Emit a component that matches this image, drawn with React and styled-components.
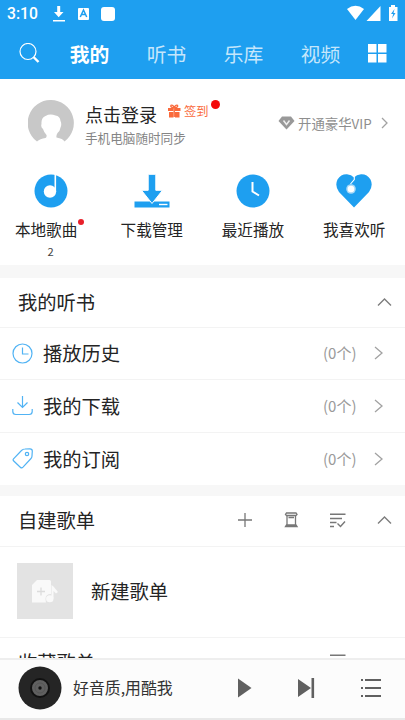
import React from "react";
import styled, { createGlobalStyle } from "styled-components";

const BLUE = "#1e9ff0";

const GlobalStyle = createGlobalStyle`
  * { box-sizing: border-box; }
  body {
    margin: 0;
    background: #fff;
    color: #242424;
    font-family: "Noto Sans CJK SC", "Noto Sans", sans-serif;
    overflow: hidden;
  }
  svg { display: block; flex: none; }
`;

const Screen = styled.div`
  width: 405px;
  height: 720px;
  display: flex;
  flex-direction: column;
  overflow: hidden;
  background: #fff;
`;

const Header = styled.header`
  flex: none;
  height: 79px;
  background: ${BLUE};
  color: #fff;
`;

const StatusBar = styled.div`
  height: 28px;
  padding: 0 7px;
  display: flex;
  align-items: center;
  justify-content: space-between;
`;

const StatusGroup = styled.div`
  display: flex;
  align-items: center;
`;

const Clock = styled.span`
  width: 46px;
  font: 500 15.7px/28px Roboto, sans-serif;
`;

const Nav = styled.nav`
  height: 51px;
  padding: 0 19px;
  display: grid;
  grid-template-columns: 32px 77px 77px 77px 77px 19px;
  align-items: center;
  & > :last-child { margin-left: 9px; }
`;

const NavTab = styled.span`
  justify-self: center;
  font-size: 19.8px;
  line-height: 50px;
  font-weight: ${(p) => (p.$active ? 700 : 400)};
  color: ${(p) => (p.$active ? "#fff" : "#c5e6fb")};
`;

const Content = styled.main`
  flex: 1;
  min-height: 0;
  overflow: hidden;
`;

const Profile = styled.section`
  height: 88px;
  padding: 0 17px 0 28px;
  display: flex;
  align-items: center;
`;

const Account = styled.div`
  flex: 1;
  margin-left: 11px;
  padding-top: 3px;
`;

const LoginRow = styled.div`
  display: flex;
  align-items: center;
  height: 26px;
`;

const LoginText = styled.span`
  font-size: 18px;
  line-height: 26px;
  width: 83px;
  white-space: nowrap;
`;

const CheckIn = styled.span`
  position: relative;
  display: flex;
  align-items: center;
  gap: 3px;
  margin-top: -5px;
  font-size: 12.3px;
  line-height: 18px;
  color: #fa6a3c;
`;

const Dot = styled.i`
  position: absolute;
  top: ${(p) => p.$top}px;
  right: ${(p) => p.$right}px;
  width: ${(p) => p.$size}px;
  height: ${(p) => p.$size}px;
  border-radius: 50%;
  background: ${(p) => p.$color};
`;

const SubText = styled.div`
  font-size: 12.6px;
  line-height: 22px;
  color: #858585;
`;

const Vip = styled.div`
  display: flex;
  align-items: center;
  font-size: 13.4px;
  line-height: 20px;
  color: #8e8e8e;
  & > span { width: 86px; padding-left: 3px; white-space: nowrap; }
`;

const Shortcuts = styled.section`
  height: 98px;
  display: grid;
  grid-template-columns: repeat(4, 101.2px);
`;

const Shortcut = styled.div`
  display: flex;
  flex-direction: column;
  align-items: center;
  padding-top: 6px;
`;

const ShortcutLabel = styled.span`
  position: relative;
  margin-top: 8px;
  margin-left: ${(p) => p.$shift || 0}px;
  font-size: 15.6px;
  line-height: 24px;
`;

const Count = styled.span`
  font: 11.2px/18px "Noto Sans CJK SC", sans-serif;
  margin-top: 1px;
  color: #444;
`;

const Band = styled.div`
  height: ${(p) => p.$height}px;
  background: #f7f7f7;
`;

const SectionHead = styled.div`
  height: ${(p) => p.$height}px;
  padding: 0 13px 2px 18px;
  display: flex;
  align-items: center;
  border-bottom: 1px solid #f3f3f3;
`;

const Title = styled.span`
  flex: 1;
  font-size: 19.3px;
  line-height: 30px;
`;

const Actions = styled.div`
  display: grid;
  grid-template-columns: 46px 46px 47px 15px;
  align-items: center;
`;

const Row = styled.div`
  height: ${(p) => p.$height}px;
  padding: 0 22px 1px 12px;
  display: flex;
  align-items: center;
  border-bottom: ${(p) => (p.$last ? "none" : "1px solid #f3f3f3")};
`;

const RowLabel = styled(Title)`
  margin-left: 10px;
`;

const RowCount = styled.span`
  width: 51px;
  font: 15px/24px "Noto Sans CJK SC", sans-serif;
  color: #9a9a9a;
  white-space: nowrap;
`;

const PlaylistItem = styled.div`
  height: 91px;
  padding: 0 17px 3px;
  display: flex;
  align-items: center;
  border-bottom: 1px solid #f3f3f3;
`;

const Cover = styled.div`
  width: 56px;
  height: 56px;
  margin-right: 18px;
  display: flex;
  align-items: center;
  justify-content: center;
  background: #e3e3e3;
`;

const Player = styled.footer`
  flex: none;
  height: 62px;
  padding: 0 24px 3px 18px;
  display: flex;
  align-items: center;
  border-top: 2px solid #eeeeee;
  border-bottom: 2px solid #e8e8e8;
  background: #fcfcfc;
`;

const Song = styled.span`
  flex: 1;
  margin-left: 11px;
  font-size: 15.9px;
  line-height: 26px;
  color: #333;
`;

const Controls = styled.div`
  display: grid;
  grid-template-columns: 60px 63px 20px;
  align-items: center;
`;

const Chevron = ({ w = 8, h = 12, color = "#a2a2a2" }) => (
  <svg width={w + 2} height={h + 2} viewBox={`0 0 ${w + 2} ${h + 2}`} fill="none" stroke={color} strokeWidth="1.3">
    <path d={`M1 1L${w + 1} ${h / 2 + 1}L1 ${h + 1}`} />
  </svg>
);

const Collapse = () => (
  <svg width="15" height="10" fill="none" stroke="#7d7d7d" strokeWidth="1.4">
    <path d="M1 8.5L7.5 2L14 8.5" />
  </svg>
);

const StatusLeft = () => (
  <svg width="64" height="18" viewBox="53 5 64 18" fill="#fff">
    <path d="M57.2 6h3v6h3.3L58.7 17.2L54 12h3.2zM53 20h12v1.6H53z" />
    <rect x="78" y="8" width="11" height="12" rx="1" />
    <path d="M80.3 17L83.5 10L86.7 17M81.5 14.5h4" fill="none" stroke={BLUE} strokeWidth="1.5" />
    <rect x="101" y="7" width="14" height="14" rx="3" />
  </svg>
);

const StatusRight = () => (
  <svg width="52" height="18" viewBox="346 5 52 18" fill="#fff">
    <path d="M347 9Q355.5 2.5 364 9L355.5 20z" />
    <path d="M380.5 6v15H366.500z" />
    <path d="M391 5h4v2h2.500v14h-8.500V7h2z" />
    <path d="M394.500 9L391 14h2.200L392 18.500L395.500 13h-2z" fill={BLUE} />
  </svg>
);

const SearchIcon = () => (
  <svg width="21" height="21" fill="none" stroke="#fff">
    <circle cx="9" cy="8.5" r="8" strokeWidth="1.2" />
    <path d="M14.5 14L19.5 19" strokeWidth="2.4" />
  </svg>
);

const GridIcon = () => (
  <svg width="19" height="19" fill="#fff">
    <path d="M0 0h8.500v8.500H0zM10 0h8.500v8.500H10zM0 10h8.500v8.500H0zM10 10h8.500v8.500H10z" />
  </svg>
);

const Avatar = () => (
  <svg width="46" height="46" fill="#c8c8c8">
    <path d="M23 0A23 23 0 0 1 36.5 41.5Q35 38.5 28.5 37.5Q28 35.5 29.5 33Q32 31 32.5 27.5Q34 24 32.5 21Q32 16 27.5 15.5Q22 13.5 17.5 16Q13 18 13.5 24Q12.5 27 15 29Q16 32.5 18.5 35Q19 37 17.5 38Q12 38.5 9 41.5A23 23 0 0 1 23 0z" />
  </svg>
);

const Gift = () => (
  <svg width="13" height="14" fill="#fa6a3c">
    <path d="M0 4h5.500v3H0zM7 4h5.500v3H7zM1 8h4.500v5.500H1zM7 8h4.500v5.500H7z" />
    <path d="M6.200 4Q2 3.500 3 1.300Q5 .5 6.200 4Q7.500 .5 9.500 1.300Q10.500 3.500 6.200 4M6.200 4v9" fill="none" stroke="#fa6a3c" strokeWidth="1.4" />
  </svg>
);

const Diamond = () => (
  <svg width="17" height="14">
    <path d="M4 .5h9L16.500 5L8.500 13.500L.5 5z" fill="#999" />
    <path d="M5.500 4.500L8.500 8.500L11.500 4.500" fill="none" stroke="#eee" strokeWidth="1.5" />
  </svg>
);

const LocalIcon = () => (
  <svg width="36" height="36">
    <circle cx="18" cy="18" r="16.5" fill={BLUE} />
    <circle cx="17" cy="18.5" r="6.2" fill="#fff" />
    <path d="M22.300 1v17.500" stroke="#fff" strokeWidth="1.6" />
  </svg>
);

const ManageIcon = () => (
  <svg width="36" height="36">
    <path d="M.5 28.500h35v6H.5z" fill={BLUE} />
    <path d="M14.200 1.300h7.600v16H28.500L18 30.500L7.500 17.300h6.700z" fill={BLUE} stroke="#fff" strokeWidth="1" />
    <path d="M25 31.500h8.500" stroke="#fff" strokeWidth="1.4" />
  </svg>
);

const RecentIcon = () => (
  <svg width="36" height="36">
    <circle cx="18" cy="18" r="16.5" fill={BLUE} />
    <path d="M17.500 9v9.500L24 22.500" fill="none" stroke="#fff" strokeWidth="2" />
  </svg>
);

const HeartIcon = () => (
  <svg width="36" height="36">
    <path d="M18 34.500L3 19Q-1.500 13 1.500 6.500Q5 1 11 1.300Q15.500 1.700 18 4.500Q20.500 1.700 25 1.300Q31 1 34.500 6.500Q37.500 13 33 19z" fill={BLUE} />
    <circle cx="15" cy="16" r="4.8" fill="#a9d9f8" />
    <circle cx="15" cy="16" r="3.3" fill="#fff" />
    <path d="M18.300 4V6.500L14.500 11" fill="none" stroke="#fff" strokeWidth="1.1" />
  </svg>
);

const LineSvg = (props) => (
  <svg width="21" height="21" fill="none" stroke="#51b3f4" strokeWidth="1.2" {...props} />
);

const HistoryIcon = () => (
  <LineSvg>
    <circle cx="10.5" cy="10.5" r="9.5" />
    <path d="M10.500 4.500v6.500H16.500" />
  </LineSvg>
);

const DownloadIcon = () => (
  <LineSvg>
    <path d="M10.500 1v11M5.500 7.500L10.500 12.500L15.500 7.500M.8 14v2.500q0 3 3 3h13.400q3 0 3-3V14" />
  </LineSvg>
);

const TagIcon = () => (
  <LineSvg>
    <path d="M1.500 10.800L9.500 2.500Q11 1 13 1L18 .8Q20.300 .8 20.300 3L20 8Q20 9.500 19 10.500L11 19.200Q9.700 20.500 8.300 19.200L1.500 12.800Q.7 11.800 1.500 10.800z" />
    <circle cx="15" cy="6" r="1.7" />
  </LineSvg>
);

const PlusIcon = () => (
  <svg width="14" height="14" stroke="#777" strokeWidth="1.3">
    <path d="M7 0v14M0 7h14" />
  </svg>
);

const ImportIcon = () => (
  <svg width="15" height="16" fill="none" stroke="#777" strokeWidth="1.3">
    <path d="M2.500 1h9.500l1 1.500l-1 1H2.500l-1-1zM3 3.500v9.500M11.500 3.500v9.500M4.500 5.500h5.500M1.500 14.500l1-1.500h9.500l1 1.500z" />
  </svg>
);

const SortIcon = () => (
  <svg width="16" height="15" fill="none" stroke="#777" strokeWidth="1.4">
    <path d="M0 1.200h15.500M0 5.500h12M0 9.500h6.500M0 13.500h4M7.500 10.500L10.500 13.500L15 8.500" />
  </svg>
);

const CoverIcon = () => (
  <svg width="28" height="26" fill="#f9f9f9">
    <path d="M6 2H18.500Q20 2 20 3.500V16Q14.500 16 14.500 21L15 24.500H1V7z" />
    <path d="M6 13.500h8M10 9.500v8" stroke="#dcdcdc" strokeWidth="1.3" />
    <path d="M20.500 7L22.500 8.500L27 14L25 15.500L22.500 13V20.500H20.500z" />
    <ellipse cx="18.8" cy="20.8" rx="3.7" ry="3.5" />
  </svg>
);

const Disc = () => (
  <svg width="44" height="44">
    <circle cx="22" cy="22" r="21.5" fill="#252525" />
    <circle cx="22" cy="22" r="9" fill="#606060" stroke="#111" strokeWidth="2" />
    <circle cx="22" cy="22" r="5" fill="none" stroke="#555" />
    <circle cx="22" cy="22" r="1.7" fill="#111" />
  </svg>
);

const PlayIcon = () => (
  <svg width="14" height="20" fill="#606060"><path d="M0 .5L13.500 10L0 19.500z" /></svg>
);

const NextIcon = () => (
  <svg width="18" height="20" fill="#606060"><path d="M0 1L13 10L0 19zM13.500 0h2.600v20h-2.600z" /></svg>
);

const QueueIcon = () => (
  <svg width="20" height="20" stroke="#606060" strokeWidth="2">
    <path d="M0 2h2M4 2h16M0 10h2M4 10h16M0 18h2M4 18h16" />
  </svg>
);

const shortcuts = [
  { label: "本地歌曲", icon: <LocalIcon />, count: "2", shift: -9 },
  { label: "下载管理", icon: <ManageIcon /> },
  { label: "最近播放", icon: <RecentIcon /> },
  { label: "我喜欢听", icon: <HeartIcon /> },
];

const rows = [
  { label: "播放历史", icon: <HistoryIcon />, height: 52 },
  { label: "我的下载", icon: <DownloadIcon />, height: 53 },
  { label: "我的订阅", icon: <TagIcon />, height: 52, last: true },
];

export default function App() {
  return (
    <>
      <GlobalStyle />
      <Screen>
        <Header>
          <StatusBar>
            <StatusGroup>
              <Clock>3:10</Clock>
              <StatusLeft />
            </StatusGroup>
            <StatusRight />
          </StatusBar>
          <Nav>
            <SearchIcon />
            <NavTab $active>我的</NavTab>
            <NavTab>听书</NavTab>
            <NavTab>乐库</NavTab>
            <NavTab>视频</NavTab>
            <GridIcon />
          </Nav>
        </Header>
        <Content>
          <Profile>
            <Avatar />
            <Account>
              <LoginRow>
                <LoginText>点击登录</LoginText>
                <CheckIn>
                  <Gift />
                  签到
                  <Dot $top={-2} $right={-11} $size={9} $color="#f40b0b" />
                </CheckIn>
              </LoginRow>
              <SubText>手机电脑随时同步</SubText>
            </Account>
            <Vip>
              <Diamond />
              <span>开通豪华VIP</span>
              <Chevron w={5} h={10} />
            </Vip>
          </Profile>
          <Shortcuts>
            {shortcuts.map((s) => (
              <Shortcut key={s.label}>
                {s.icon}
                <ShortcutLabel $shift={s.shift}>
                  {s.label}
                  {s.count && <Dot $top={2} $right={-7} $size={6} $color="#e8202a" />}
                </ShortcutLabel>
                {s.count && <Count>{s.count}</Count>}
              </Shortcut>
            ))}
          </Shortcuts>
          <Band $height={13} />
          <SectionHead $height={50}>
            <Title>我的听书</Title>
            <Collapse />
          </SectionHead>
          {rows.map((r) => (
            <Row key={r.label} $height={r.height} $last={r.last}>
              {r.icon}
              <RowLabel>{r.label}</RowLabel>
              <RowCount>(0个)</RowCount>
              <Chevron w={7} h={12} />
            </Row>
          ))}
          <Band $height={11} />
          <SectionHead $height={51}>
            <Title>自建歌单</Title>
            <Actions>
              <PlusIcon />
              <ImportIcon />
              <SortIcon />
              <Collapse />
            </Actions>
          </SectionHead>
          <PlaylistItem>
            <Cover><CoverIcon /></Cover>
            <Title>新建歌单</Title>
          </PlaylistItem>
          <SectionHead $height={50}>
            <Title>收藏歌单</Title>
            <Actions>
              <span />
              <span />
              <SortIcon />
              <Collapse />
            </Actions>
          </SectionHead>
        </Content>
        <Player>
          <Disc />
          <Song>好音质,用酷我</Song>
          <Controls>
            <PlayIcon />
            <NextIcon />
            <QueueIcon />
          </Controls>
        </Player>
      </Screen>
    </>
  );
}
